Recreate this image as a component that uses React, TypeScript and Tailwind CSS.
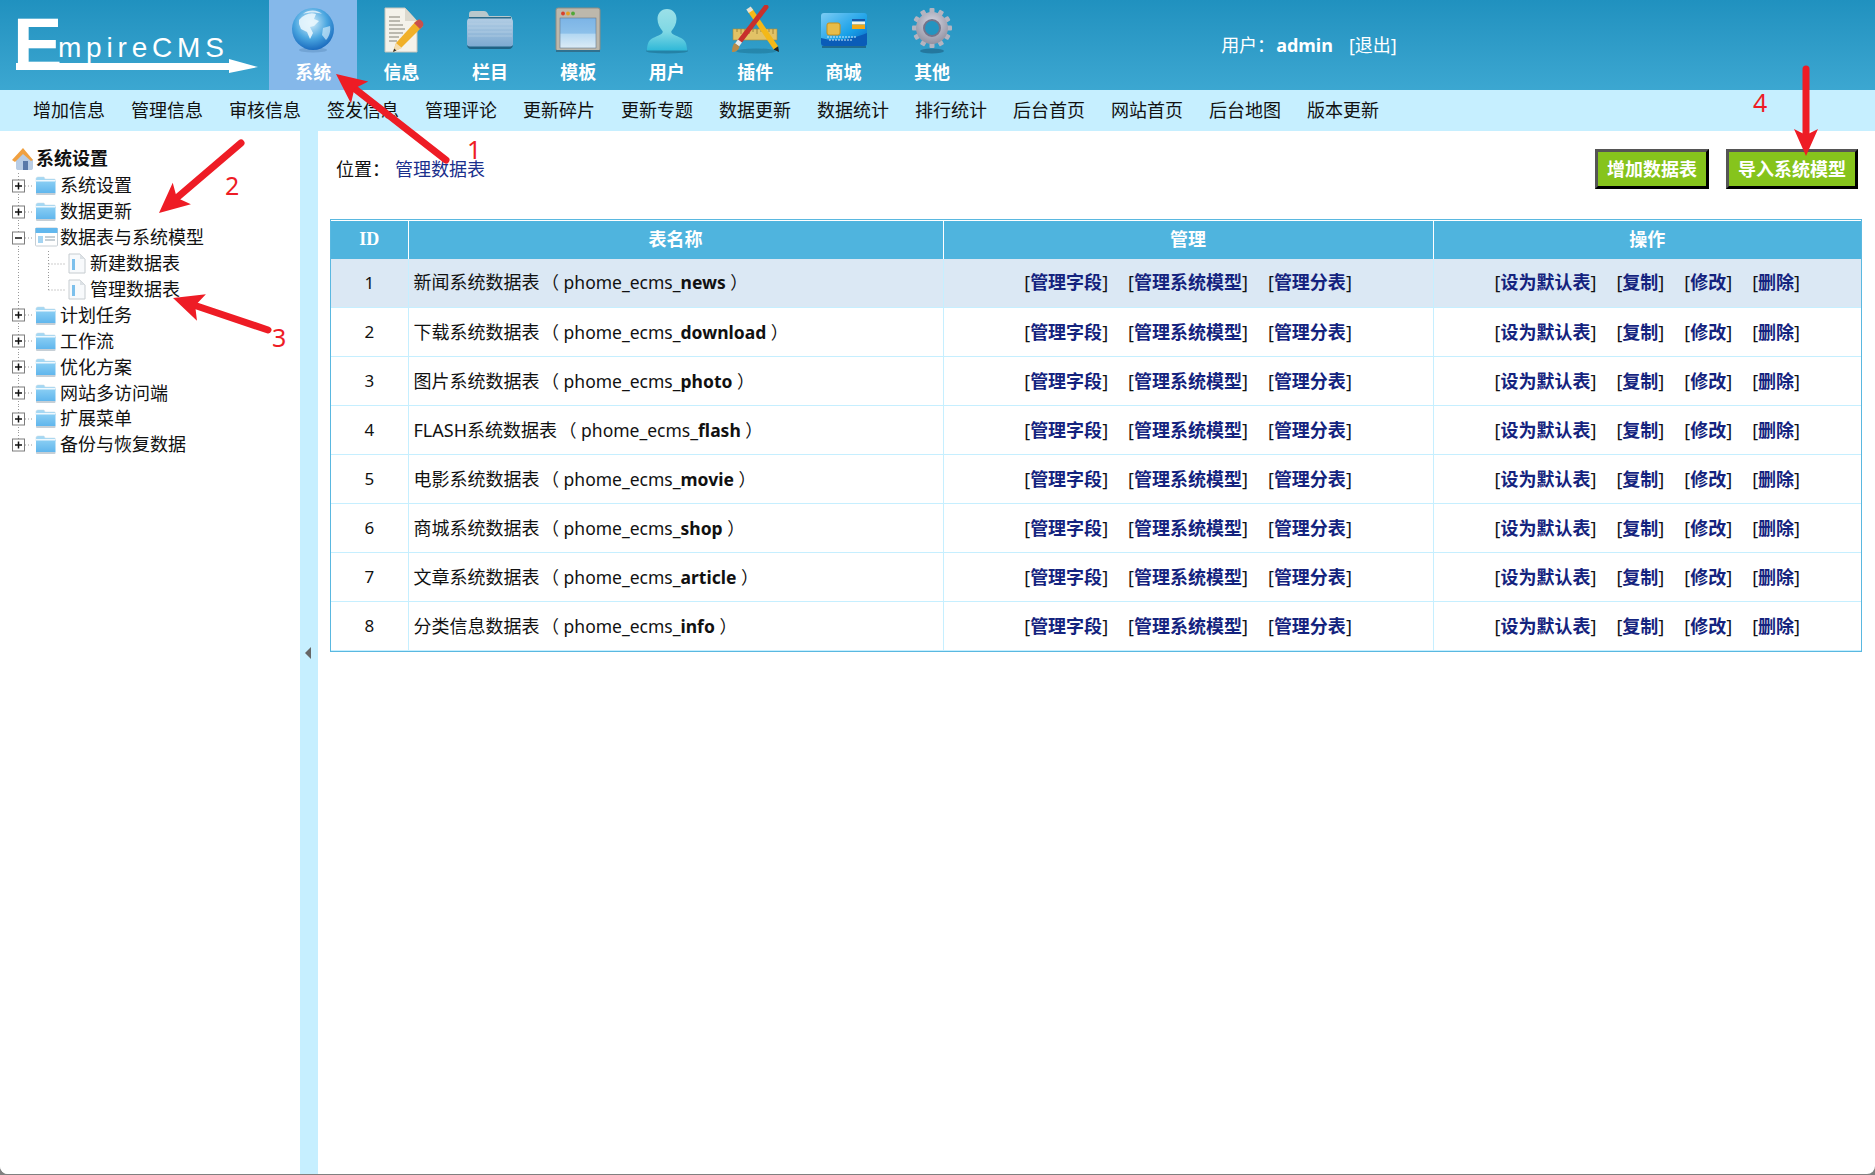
import React from "react";

const FONT = '"Noto Sans","Noto Sans CJK SC",sans-serif';

function Globe() {
  return (
    <svg width="48" height="48" viewBox="0 0 48 48">
      <defs>
        <radialGradient id="gl" cx="0.45" cy="0.35" r="0.7">
          <stop offset="0" stopColor="#d8f0fb" />
          <stop offset="0.55" stopColor="#4aa6e0" />
          <stop offset="1" stopColor="#1260b8" />
        </radialGradient>
      </defs>
      <ellipse cx="24" cy="44" rx="14" ry="2.5" fill="#5f8fc0" opacity="0.5" />
      <circle cx="24" cy="23" r="21" fill="url(#gl)" />
      <path d="M10 14c5-6 12-8 17-6l-2 5 5 2-5 5-4 1 3 6-3 6-3-7-6-3-2-5z" fill="#e8f6fd" opacity="0.9" />
      <path d="M34 22l7-2c1 5-1 11-4 14l-4-5z" fill="#cfeafa" opacity="0.7" />
      <path d="M14 8c6-5 15-4 19 0-6-2-13-2-19 0z" fill="#fff" opacity="0.7" />
    </svg>
  );
}
function DocPencil() {
  return (
    <svg width="48" height="48" viewBox="0 0 48 48">
      <path d="M7 2h20l12 13v31H7z" fill="#f4f2ea" stroke="#c8c6bc" />
      <path d="M27 2v13h12z" fill="#dcd9ce" />
      <path d="M11 11h11M11 15h11M11 19h14M11 23h16M11 27h14M11 31h10M11 35h8" stroke="#a8a69c" strokeWidth="1.6" />
      <path d="M15 46l3-9 21-23 6 6-22 22z" fill="#f0b028" />
      <path d="M36 17l6 6 3-3c1-2 0-4-1-5s-3-2-4-1z" fill="#c8504c" />
      <path d="M15 46l3-9 6 5z" fill="#f3dcae" />
      <path d="M15 46l1.2-3.4 2.2 2z" fill="#333" />
    </svg>
  );
}
function Folder() {
  return (
    <svg width="50" height="48" viewBox="0 0 50 48">
      <defs>
        <linearGradient id="fo" x1="0" y1="0" x2="0" y2="1">
          <stop offset="0" stopColor="#b2cde4" />
          <stop offset="1" stopColor="#7aa8d0" />
        </linearGradient>
      </defs>
      <path d="M4 8c0-2 1-3 3-3h12c2 0 3 1 4 3l1 2h20c2 0 3 1 3 3v6H4z" fill="#b9c8cc" />
      <rect x="2" y="12" width="46" height="30" rx="4" fill="url(#fo)" />
      <path d="M3 18h44M3 22h44M3 26h44M3 30h44" stroke="#c2d8ea" strokeWidth="1" opacity="0.5" />
      <path d="M2 39c0 2 1.500 4 4 4h38c2.500 0 4-2 4-4-1 1-2 1.500-4 1.500H6c-2 0-3-.5-4-1.500z" fill="#1f6284" />
      <rect x="4" y="11" width="42" height="1.500" fill="#2a6a8a" />
    </svg>
  );
}
function WindowIcon() {
  return (
    <svg width="48" height="48" viewBox="0 0 48 48">
      <defs>
        <linearGradient id="wi" x1="0" y1="0" x2="0" y2="1">
          <stop offset="0" stopColor="#7cb4e6" />
          <stop offset="0.5" stopColor="#8cc0ea" />
          <stop offset="0.55" stopColor="#b4d8f2" />
          <stop offset="1" stopColor="#dcecf6" />
        </linearGradient>
      </defs>
      <rect x="2" y="2" width="44" height="43" rx="2" fill="#bdb8ac" stroke="#8f8b82" />
      <rect x="6" y="12" width="36" height="30" fill="url(#wi)" stroke="#65788c" strokeWidth="0.6" />
      <circle cx="9" cy="7.5" r="1.9" fill="#d8402c" />
      <circle cx="14" cy="7.5" r="1.9" fill="#e8a020" />
      <circle cx="19" cy="7.5" r="1.9" fill="#50a838" />
      <rect x="2" y="44" width="44" height="2" fill="#31718f" />
    </svg>
  );
}
function UserIcon() {
  return (
    <svg width="50" height="48" viewBox="0 0 50 48">
      <defs>
        <linearGradient id="us" x1="0" y1="0" x2="0" y2="1">
          <stop offset="0" stopColor="#9be0e8" />
          <stop offset="0.55" stopColor="#7fd8e4" />
          <stop offset="1" stopColor="#2fb8d8" />
        </linearGradient>
      </defs>
      <ellipse cx="25" cy="45" rx="21" ry="2.5" fill="#1c6f8f" opacity="0.6" />
      <path d="M25 3c6 0 9.500 4.500 9.500 10 0 5-2.500 9-5 12-.8 1 .2 2.500 2 3.500 5 2.500 11 4 12.500 9 .6 2 1 4 1 7H5c0-3 .4-5 1-7 1.500-5 7.500-6.500 12.500-9 1.800-1 2.800-2.500 2-3.500-2.500-3-5-7-5-12C15.500 7.500 19 3 25 3z" fill="url(#us)" />
    </svg>
  );
}
function ToolsIcon() {
  return (
    <svg width="52" height="50" viewBox="0 0 52 50">
      <ellipse cx="27" cy="46" rx="20" ry="2.500" fill="#1c6f8f" opacity="0.5" />
      <rect x="4" y="24" width="44" height="11" fill="#e2c266" stroke="#a88a3a" strokeWidth="0.6" />
      <path d="M8 24v3M12 24v5M16 24v3M20 24v5M24 24v3M28 24v5M32 24v3M36 24v5M40 24v3M44 24v5" stroke="#8f7630" strokeWidth="0.8" />
      <line x1="21" y1="5" x2="47" y2="43" stroke="#f4b818" strokeWidth="5.500" />
      <line x1="19.500" y1="3" x2="22" y2="6.500" stroke="#e8e2d4" strokeWidth="5.500" />
      <path d="M44.500 44.500l4.600-3.200.9 5.700z" fill="#222" />
      <line x1="37" y1="2" x2="11" y2="36" stroke="#c8302c" strokeWidth="5" strokeLinecap="round" />
      <line x1="11" y1="36" x2="8" y2="40" stroke="#e8e8e8" strokeWidth="5" />
      <path d="M5.500 38l5 3.500c-.5 3.500-3.500 5.500-7.500 5.500 0-3 .5-6.500 2.500-9z" fill="#b88a48" />
    </svg>
  );
}
function CardIcon() {
  return (
    <svg width="50" height="40" viewBox="0 0 50 40">
      <defs>
        <linearGradient id="ca" x1="0" y1="0" x2="1" y2="1">
          <stop offset="0" stopColor="#7cccf4" />
          <stop offset="0.6" stopColor="#18a0e8" />
          <stop offset="1" stopColor="#0a62c0" />
        </linearGradient>
      </defs>
      <rect x="2" y="3" width="46" height="33" rx="3" fill="url(#ca)" />
      <path d="M2 28c14 4 32 1 46-5v10c0 2-1 3-3 3H5c-2 0-3-1-3-3z" fill="#0a5cb8" />
      <rect x="33" y="9" width="13" height="2.500" fill="#1a58a8" />
      <rect x="33" y="11.500" width="13" height="3" fill="#f4f4e8" />
      <rect x="33" y="14.500" width="13" height="4.500" fill="#f0a818" />
      <rect x="8" y="13" width="13" height="12" rx="2" fill="#e8bc48" stroke="#c89018" />
      <path d="M8 27h30M10 30h24" stroke="#d0ecfa" strokeWidth="1" strokeDasharray="2 1" />
      <rect x="3" y="36" width="44" height="2" fill="#1c5f82" opacity="0.8" />
    </svg>
  );
}
function Gear() {
  const teeth = Array.from({ length: 12 }, (_, i) => i * 30);
  return (
    <svg width="48" height="50" viewBox="0 0 48 50">
      <defs>
        <radialGradient id="ge" cx="0.5" cy="0.35" r="0.7">
          <stop offset="0" stopColor="#d8d8e4" />
          <stop offset="1" stopColor="#8c8c9c" />
        </radialGradient>
      </defs>
      <ellipse cx="24" cy="46" rx="12" ry="2.500" fill="#1c5f82" opacity="0.6" />
      {teeth.map((a) => (
        <rect key={a} x="21.500" y="3" width="5" height="9" rx="1" fill="#b4b4c0" transform={`rotate(${a} 24 23)`} />
      ))}
      <circle cx="24" cy="23" r="16" fill="url(#ge)" />
      <circle cx="24" cy="23" r="8" fill="#2494c0" stroke="#74748a" strokeWidth="2" />
    </svg>
  );
}

function Logo() {
  return (
    <div className="relative w-[269px] h-full shrink-0 text-white" style={{ fontFamily: '"Liberation Sans",sans-serif' }}>
      <span className="absolute left-[13px] top-[3px] text-[74px] leading-[84px] font-bold">E</span>
      <span className="absolute left-[58px] top-[33px] text-[28px] leading-[30px] tracking-[4.8px]">mpireCMS</span>
      <svg className="absolute left-[16px] top-[56px]" width="244" height="20" viewBox="0 0 244 20">
        <path d="M0 7h213V3l29 8-29 6v-3H0z" fill="#fff" />
      </svg>
    </div>
  );
}

const tabs: [string, React.ReactNode][] = [
  ["系统", <Globe />],
  ["信息", <DocPencil />],
  ["栏目", <Folder />],
  ["模板", <WindowIcon />],
  ["用户", <UserIcon />],
  ["插件", <ToolsIcon />],
  ["商城", <CardIcon />],
  ["其他", <Gear />],
];

const subnav = ["增加信息", "管理信息", "审核信息", "签发信息", "管理评论", "更新碎片", "更新专题", "数据更新", "数据统计", "排行统计", "后台首页", "网站首页", "后台地图", "版本更新"];

function TreeFolder() {
  return (
    <svg width="21" height="21" viewBox="0 0 21 21" className="shrink-0">
      <defs>
        <linearGradient id="tf" x1="0" y1="0" x2="0" y2="1">
          <stop offset="0" stopColor="#8dd0f4" />
          <stop offset="1" stopColor="#5db4ec" />
        </linearGradient>
      </defs>
      <path d="M1 4c0-1 .5-2 2-2h6l1 2h9c1 0 1.500.5 1.500 2v1H1z" fill="#a4d8f4" stroke="#c4d8e4" strokeWidth="0.5" />
      <rect x="1" y="5" width="19.500" height="14" rx="1.500" fill="url(#tf)" />
      <rect x="1" y="5" width="19.500" height="1.500" fill="#fff" opacity="0.85" />
      <rect x="1" y="18" width="19.500" height="2" rx="1" fill="#c6cfd6" />
    </svg>
  );
}
function TreeOpenIcon() {
  return (
    <svg width="23" height="21" viewBox="0 0 23 21" className="shrink-0">
      <rect x="0.500" y="1" width="22" height="18" rx="1" fill="#fff" stroke="#c6ced4" />
      <rect x="0.500" y="1" width="22" height="5" fill="#62b8ee" />
      <rect x="3" y="9" width="5" height="7" fill="#a4d4f2" />
      <path d="M10 10h10M10 13h10" stroke="#b4c0c8" strokeWidth="1.500" />
    </svg>
  );
}
function TreeFile() {
  return (
    <svg width="19" height="21" viewBox="0 0 19 21" className="shrink-0">
      <path d="M1 1h11l5 5v14H1z" fill="#f8fafc" stroke="#c6ccd0" />
      <path d="M12 1v5h5z" fill="#dde2e6" />
      <rect x="4" y="6" width="3" height="11" fill="#7cc0ec" />
    </svg>
  );
}

function TreeLead({ state, last, child, childLast }: { state?: "plus" | "minus"; last?: boolean; child?: boolean; childLast?: boolean }) {
  const dot = { stroke: "#9a9a9a", strokeDasharray: "1 2", strokeWidth: 1 };
  if (child) {
    return (
      <svg width="68" height="26" viewBox="0 0 68 26" className="shrink-0">
        <path d="M18.500 0v26" {...dot} />
        <path d={childLast ? "M48.500 0v13" : "M48.500 0v26"} {...dot} />
        <path d="M48.500 13H66" {...dot} />
      </svg>
    );
  }
  return (
    <svg width="35" height="26" viewBox="0 0 35 26" className="shrink-0">
      <path d={last ? "M18.500 0v7" : "M18.500 0v26"} {...dot} />
      <path d="M25 13h9" {...dot} />
      <rect x="12.500" y="7" width="12" height="12" fill="#fff" stroke="#7c7c7c" />
      <path d="M15 13h7" stroke="#111" strokeWidth="1.500" />
      {state === "plus" && <path d="M18.500 9.500v7" stroke="#111" strokeWidth="1.500" />}
    </svg>
  );
}

const treeTop: [string, "plus" | "minus"][] = [
  ["系统设置", "plus"],
  ["数据更新", "plus"],
];
const treeBottom = ["计划任务", "工作流", "优化方案", "网站多访问端", "扩展菜单", "备份与恢复数据"];

function Row({ children }: { children: React.ReactNode }) {
  return <div className="flex h-[25.9px] items-center whitespace-nowrap">{children}</div>;
}

function Sidebar() {
  return (
    <aside className="w-[300px] shrink-0 bg-white pt-[15px] text-[18px] text-[#111]">
      <div className="mb-[2px] flex h-[25px] items-center pl-[11px]">
        <svg width="24" height="24" viewBox="0 0 24 24" className="shrink-0">
          <path d="M5 12l8-7 9 8v8c0 1.500-1 2-2 2H7c-1 0-2-.5-2-2z" fill="#b8cce4" />
          <path d="M1 13L12 1l10 12-2 1-8-7-8 8z" fill="#f0a040" />
          <rect x="12" y="14" width="5" height="9" fill="#5878a8" />
        </svg>
        <span className="ml-[1px] font-bold">系统设置</span>
      </div>
      {treeTop.map(([t, s]) => (
        <Row key={t}>
          <TreeLead state={s} />
          <TreeFolder />
          <span className="ml-[4px]">{t}</span>
        </Row>
      ))}
      <Row>
        <TreeLead state="minus" />
        <TreeOpenIcon />
        <span className="ml-[2px]">数据表与系统模型</span>
      </Row>
      <Row>
        <TreeLead child />
        <TreeFile />
        <span className="ml-[3px]">新建数据表</span>
      </Row>
      <Row>
        <TreeLead child childLast />
        <TreeFile />
        <span className="ml-[3px]">管理数据表</span>
      </Row>
      {treeBottom.map((t, i) => (
        <Row key={t}>
          <TreeLead state="plus" last={i === treeBottom.length - 1} />
          <TreeFolder />
          <span className="ml-[4px]">{t}</span>
        </Row>
      ))}
    </aside>
  );
}

const rows: [string, string, string][] = [
  ["1", "新闻系统数据表", "news"],
  ["2", "下载系统数据表", "download"],
  ["3", "图片系统数据表", "photo"],
  ["4", "FLASH系统数据表", "flash"],
  ["5", "电影系统数据表", "movie"],
  ["6", "商城系统数据表", "shop"],
  ["7", "文章系统数据表", "article"],
  ["8", "分类信息数据表", "info"],
];

function Links({ items }: { items: string[] }) {
  return (
    <div className="flex items-center justify-center gap-[20px] whitespace-nowrap">
      {items.map((t) => (
        <span key={t} className="text-[#111]">
          [<a className="font-semibold text-[#14237e]">{t}</a>]
        </span>
      ))}
    </div>
  );
}

function Button({ children, w }: { children: React.ReactNode; w: string }) {
  return (
    <button className={`${w} h-[40px] border-[3px] border-t-[#555] border-l-[#555] border-r-black border-b-black bg-[#86c41c] text-[18px] font-bold text-white`}>
      {children}
    </button>
  );
}

function Arrow({ x1, y1, x2, y2, len = 30, half = 14 }: { x1: number; y1: number; x2: number; y2: number; len?: number; half?: number }) {
  const d = Math.hypot(x2 - x1, y2 - y1);
  const ux = (x2 - x1) / d;
  const uy = (y2 - y1) / d;
  const px = -uy;
  const py = ux;
  const bx = x2 - ux * len;
  const by = y2 - uy * len;
  const nx = x2 - ux * len * 0.78;
  const ny = y2 - uy * len * 0.78;
  const pts = [
    [x2, y2],
    [bx + px * half, by + py * half],
    [nx, ny],
    [bx - px * half, by - py * half],
  ]
    .map((p) => p.join(","))
    .join(" ");
  return (
    <g>
      <line x1={x1} y1={y1} x2={nx} y2={ny} stroke="#ee1c25" strokeWidth="7" strokeLinecap="round" />
      <polygon points={pts} fill="#ee1c25" />
    </g>
  );
}

function Annotations() {
  const labels: [string, string][] = [
    ["1", "left-[467px] top-[135px]"],
    ["2", "left-[225px] top-[171px]"],
    ["3", "left-[272px] top-[323px]"],
    ["4", "left-[1753px] top-[88px]"],
  ];
  return (
    <>
      <svg className="pointer-events-none absolute left-0 top-0" width="1875" height="1175" viewBox="0 0 1875 1175">
        <Arrow x1={446} y1={160} x2={336} y2={74} />
        <Arrow x1={241} y1={143} x2={159} y2={213} />
        <Arrow x1={268} y1={330} x2={173} y2={298} />
        <Arrow x1={1806} y1={69} x2={1806} y2={156} len={27} half={12} />
      </svg>
      {labels.map(([t, c]) => (
        <span key={t} className={`pointer-events-none absolute ${c} text-[25px] leading-[28px] text-[#ee1c25]`}>
          {t}
        </span>
      ))}
    </>
  );
}

export default function App() {
  return (
    <div className="relative h-[1175px] w-[1875px] overflow-hidden bg-[#808080]" style={{ fontFamily: FONT }}>
      <div className="flex h-[1174px] flex-col overflow-hidden rounded-b-lg bg-white">
        <header className="flex h-[90px] shrink-0 bg-gradient-to-b from-[#2091bf] to-[#3ca7d1]">
          <Logo />
          <nav className="flex">
            {tabs.map(([label, icon], i) => (
              <div key={label} className={`flex h-[90px] w-[88.4px] flex-col items-center ${i === 0 ? "bg-[#85b8ea]" : ""}`}>
                <div className="flex h-[58px] items-center justify-center pt-[2px]">{icon}</div>
                <span className="mt-[2px] text-[18px] font-bold leading-[24px] text-white">{label}</span>
              </div>
            ))}
          </nav>
          <div className="ml-[245px] flex h-full items-center text-[18px] text-white">
            <span>用户：</span>
            <span className="ml-[1px] text-[18px] font-bold">admin</span>
            <span className="ml-[16px] text-[18px]">[退出]</span>
          </div>
        </header>
        <div className="flex h-[41px] shrink-0 items-center gap-[26px] bg-[#c6efff] pl-[33px] text-[18px] text-[#111]">
          {subnav.map((s) => (
            <span key={s} className="whitespace-nowrap">{s}</span>
          ))}
        </div>
        <div className="flex min-h-0 flex-1">
          <Sidebar />
          <div className="flex w-[18px] shrink-0 items-center justify-center bg-[#c6efff]">
            <svg width="6" height="12" viewBox="0 0 6 12" className="mr-[2px]">
              <path d="M6 0v12L0 6z" fill="#666" />
            </svg>
          </div>
          <main className="min-w-0 flex-1 pl-[12px] pr-[13px] pt-[18px] text-[18px] text-[#111]">
            <div className="flex h-[40px] items-center justify-between pl-[6px] pr-[4px]">
              <div className="flex items-center">
                <span>位置：</span>
                <a className="ml-[5px] text-[#1a2f8c]">管理数据表</a>
              </div>
              <div className="flex gap-[17px]">
                <Button w="w-[114px]">增加数据表</Button>
                <Button w="w-[132px]">导入系统模型</Button>
              </div>
            </div>
            <div className="mt-[30px] w-[1532px] border border-[#5ab8e0]">
              <table className="w-[1530px] table-fixed border-collapse">
                <colgroup>
                  <col className="w-[77px]" />
                  <col className="w-[535px]" />
                  <col className="w-[490px]" />
                  <col className="w-[428px]" />
                </colgroup>
                <thead>
                  <tr className="h-[38px] bg-[#4fb4de] font-bold text-white">
                    <th className="border-r border-t border-white text-center" style={{ fontFamily: '"Liberation Serif",serif' }}>ID</th>
                    <th className="border-x border-t border-white text-center">表名称</th>
                    <th className="border-x border-t border-white text-center">管理</th>
                    <th className="border-l border-t border-white text-center">操作</th>
                  </tr>
                </thead>
                <tbody>
                  {rows.map(([id, name, tbl], i) => (
                    <tr key={id} className={`h-[49px] ${i === 0 ? "bg-[#dbe8f4]" : "bg-white"}`}>
                      <td className="border-r border-b border-[#c6efff] text-center text-[17px]">{id}</td>
                      <td className="whitespace-nowrap border-x border-b border-[#c6efff] pl-[5px]">
                        {name}
                        <span className="ml-[2px] text-[17.5px]">
                          （ phome_ecms_<b>{tbl}</b> ）
                        </span>
                      </td>
                      <td className="border-x border-b border-[#c6efff]">
                        <Links items={["管理字段", "管理系统模型", "管理分表"]} />
                      </td>
                      <td className="border-l border-b border-[#c6efff]">
                        <Links items={["设为默认表", "复制", "修改", "删除"]} />
                      </td>
                    </tr>
                  ))}
                </tbody>
              </table>
            </div>
          </main>
        </div>
      </div>
      <Annotations />
    </div>
  );
}
